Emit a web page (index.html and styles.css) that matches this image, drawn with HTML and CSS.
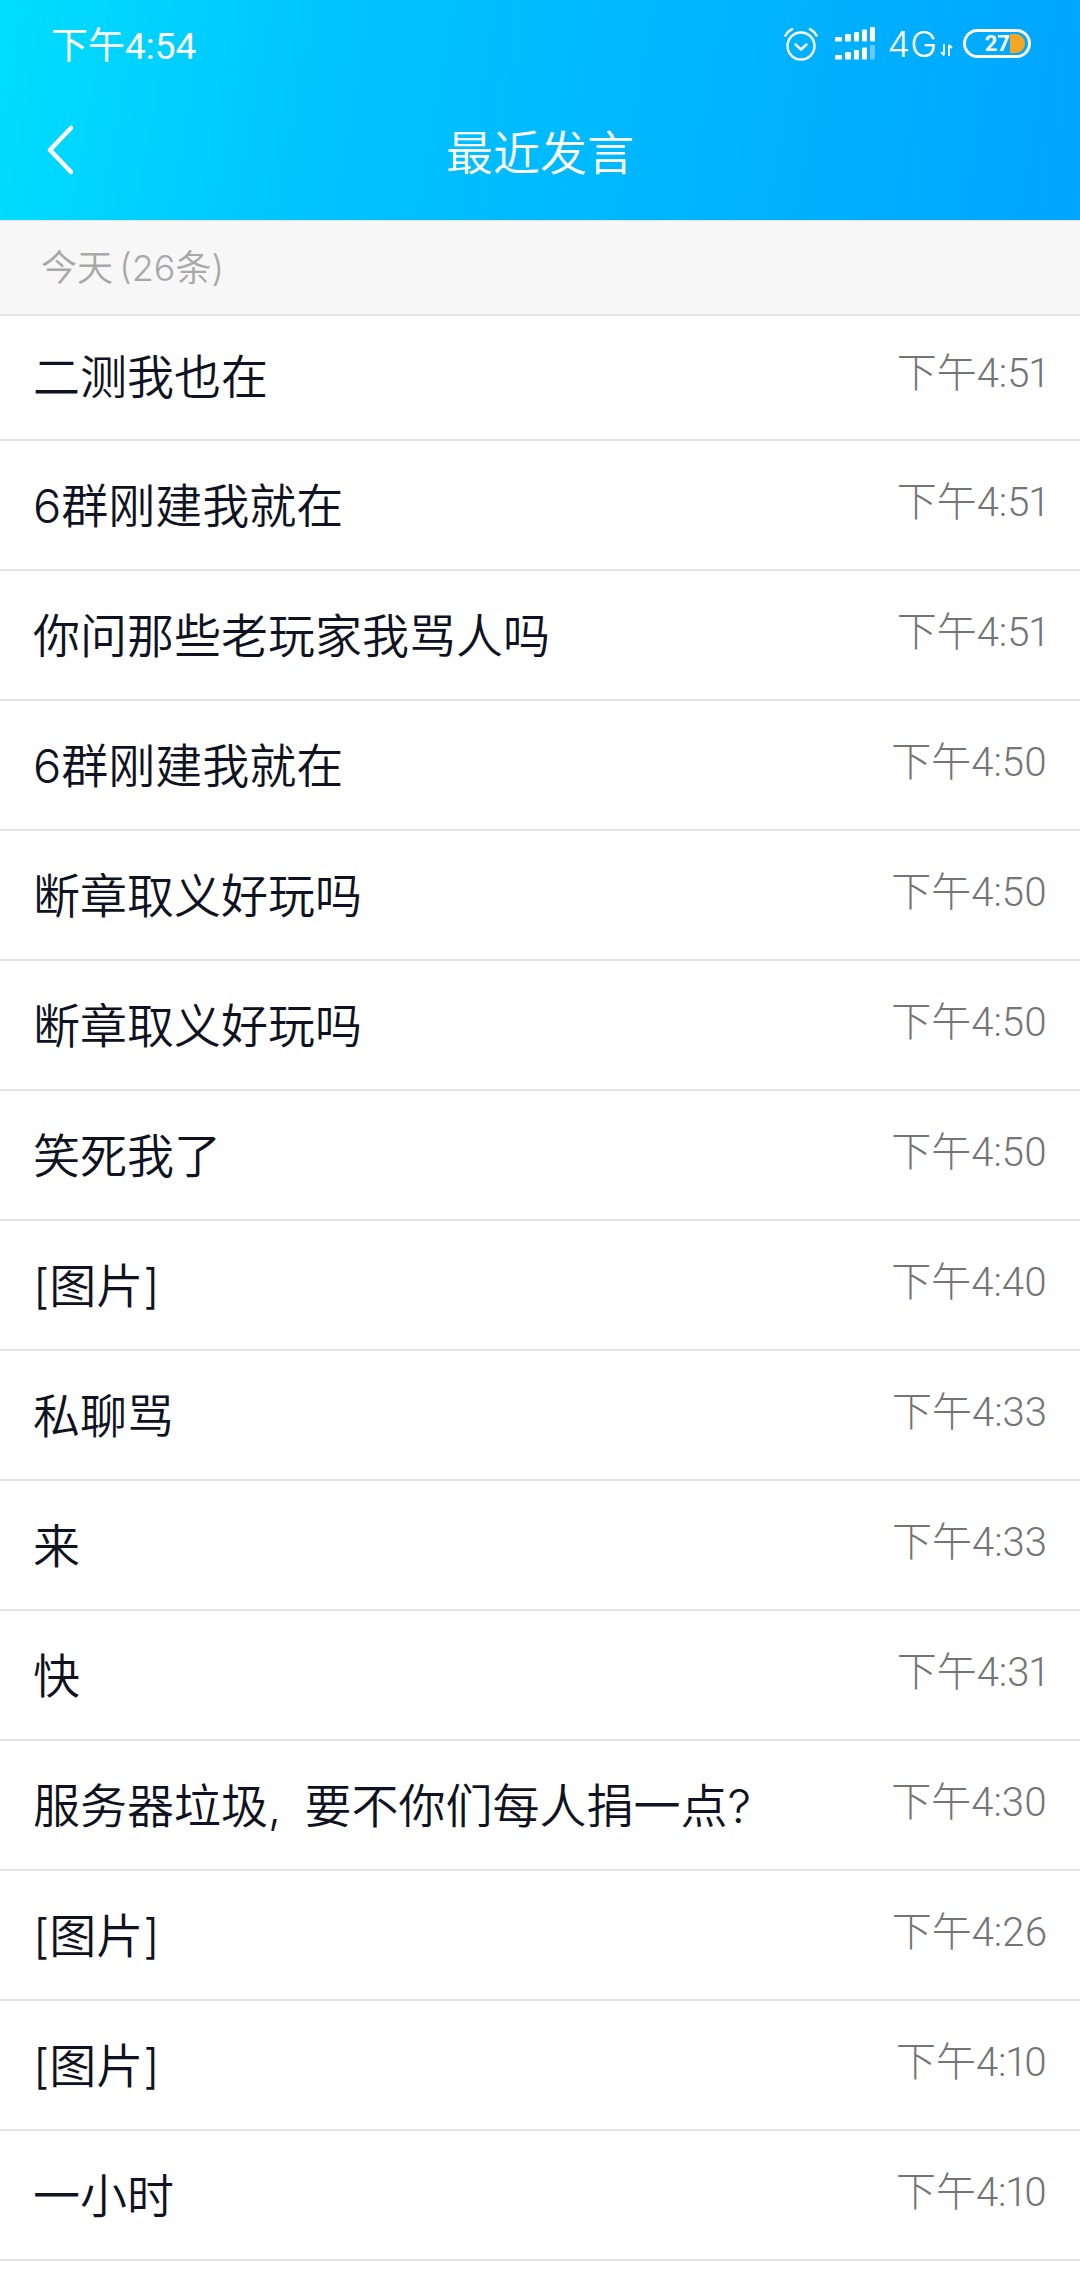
FILE: index.html
```html
<!DOCTYPE html>
<html lang="zh-CN">
<head>
  <meta charset="UTF-8" />
  <title>最近发言</title>
  <meta name="viewport" content="width=device-width, initial-scale=1" />
  <link rel="stylesheet" href="styles.css">
</head>
<body>

  <header class="top">
    <div class="status-bar">
      <span class="clock">下午4:54</span>
      <div class="status-icons">
        <svg class="alarm" width="36" height="36" viewBox="0 0 36 36" fill="none" stroke="#fff" stroke-linecap="round">
          <circle cx="18" cy="20" r="13.5" stroke-width="2.4" />
          <path d="M12.5 18.5l5.5 5 5.5-5" stroke-width="2.4" stroke-linejoin="round" />
          <path d="M2.5 9.5C4 6.5 6.5 4.5 9 3.2M33.5 9.5C32 6.5 29.500 4.500 27 3.200" stroke-width="2.6" />
        </svg>
        <svg class="signal" width="41" height="33" viewBox="0 0 41 33" fill="#fff">
          <rect x="0" y="10" width="7" height="4.500" rx="1" />
          <rect x="10" y="7" width="6" height="7.500" rx="1" />
          <rect x="19" y="5" width="5" height="9.500" rx="1" />
          <rect x="27" y="2.500" width="5" height="12" rx="1" />
          <rect x="35" y="0" width="5" height="14.500" rx="1" />
          <rect x="0" y="28" width="7" height="4.500" rx="1" />
          <rect x="10" y="25" width="6" height="7.500" rx="1" />
          <rect x="19" y="23" width="5" height="9.500" rx="1" />
          <rect x="27" y="20.500" width="5" height="12" rx="1" />
          <rect x="35" y="18" width="5" height="14.500" rx="1" fill="#6cc8ff" />
        </svg>
        <span class="net">4G</span>
        <svg class="updown" width="13" height="14" viewBox="0 0 13 14" fill="none" stroke="#fff" stroke-width="1.800">
          <path d="M4 1v11M1 9l3 3.500M9 13V2M9 2l3 3" />
        </svg>
        <div class="battery">
          <span class="battery-num">27</span>
          <span class="battery-dot"></span>
        </div>
      </div>
    </div>
    <div class="nav-bar">
      <svg class="back" width="26" height="50" viewBox="0 0 26 50" fill="none" stroke="#fff" stroke-width="4.500" stroke-linecap="round" stroke-linejoin="round">
        <path d="M24 3L3 25l21 22" />
      </svg>
      <h1 class="title">最近发言</h1>
    </div>
  </header>

  <div class="day-label">今天 (26条)</div>

  <ul class="msg-list">
    <li class="msg msg-first"><p>二测我也在</p><time>下午4:51</time></li>
    <li class="msg"><p>6群刚建我就在</p><time>下午4:51</time></li>
    <li class="msg"><p>你问那些老玩家我骂人吗</p><time>下午4:51</time></li>
    <li class="msg"><p>6群刚建我就在</p><time>下午4:50</time></li>
    <li class="msg"><p>断章取义好玩吗</p><time>下午4:50</time></li>
    <li class="msg"><p>断章取义好玩吗</p><time>下午4:50</time></li>
    <li class="msg"><p>笑死我了</p><time>下午4:50</time></li>
    <li class="msg"><p>[图片]</p><time>下午4:40</time></li>
    <li class="msg"><p>私聊骂</p><time>下午4:33</time></li>
    <li class="msg"><p>来</p><time>下午4:33</time></li>
    <li class="msg"><p>快</p><time>下午4:31</time></li>
    <li class="msg"><p>服务器垃圾, 要不你们每人捐一点?</p><time>下午4:30</time></li>
    <li class="msg"><p>[图片]</p><time>下午4:26</time></li>
    <li class="msg"><p>[图片]</p><time>下午4:10</time></li>
    <li class="msg"><p>一小时</p><time>下午4:10</time></li>
  </ul>

</body>
</html>
```

FILE: styles.css
```css
body {
  font-family: Roboto, 'Noto Sans CJK SC', sans-serif;
  background-color: #fff;
  margin: 0;
  color: #0f1220;
}

.top {
  height: 220px;
  box-sizing: border-box;
  background: linear-gradient(100deg, #00deff 0%, #00c4ff 30%, #00a5ff 100%);
  color: #fff;
}

.status-bar {
  height: 90px;
  display: flex;
  align-items: center;
  justify-content: space-between;
  padding: 0 49px 0 51px;
}

.clock {
  font-size: 37px;
  margin-bottom: 5px;
}

.status-icons {
  display: flex;
  align-items: center;
  margin-bottom: 3px;
}

.alarm {
  margin-right: 16px;
}

.signal {
  margin-right: 12px;
}

.net {
  font-family: Inter, sans-serif;
  font-size: 36px;
  font-weight: 300;
  margin-right: 3px;
}

.updown {
  margin-top: 12px;
  margin-right: 10px;
}

.battery {
  width: 68px;
  height: 29px;
  box-sizing: border-box;
  border: 3px solid #fff;
  border-radius: 15px;
  display: flex;
  align-items: center;
  justify-content: flex-end;
  padding-right: 3px;
}

.battery-num {
  font-size: 22px;
  font-weight: 700;
  line-height: 1;
}

.battery-dot {
  width: 15px;
  height: 19px;
  background-color: #f5a623;
  border-radius: 0 10px 10px 0;
}

.nav-bar {
  height: 130px;
  display: flex;
  align-items: center;
  justify-content: center;
  position: relative;
}

.back {
  position: absolute;
  left: 47px;
  top: 35px;
}

.title {
  margin: 0 0 12px;
  font-size: 47px;
  font-weight: 350;
}

.day-label {
  height: 96px;
  box-sizing: border-box;
  padding: 0 0 5px 41px;
  display: flex;
  align-items: center;
  background-color: #f7f7f7;
  border-top: 1px solid #e4e4e4;
  border-bottom: 2px solid #e4e4e4;
  color: #a8a8a8;
  font-family: Inter, 'Noto Sans CJK SC', sans-serif;
  font-size: 36px;
  font-weight: 350;
  word-spacing: -4px;
}

.msg-list {
  list-style: none;
  margin: 0;
  padding: 0;
}

.msg {
  height: 130px;
  box-sizing: border-box;
  display: flex;
  align-items: center;
  justify-content: space-between;
  padding: 0 33px;
  border-bottom: 2px solid #e4e4e4;
}

.msg-first {
  height: 125px;
  padding-bottom: 4px;
}

.msg p {
  margin: 0 0 5px;
  font-family: Inter, 'Noto Sans CJK SC', sans-serif;
  font-size: 47px;
  font-weight: 350;
  word-spacing: 10px;
}

.msg time {
  font-size: 40px;
  font-weight: 300;
  font-feature-settings: "pnum";
  color: #747474;
  margin-bottom: 12px;
}
```
